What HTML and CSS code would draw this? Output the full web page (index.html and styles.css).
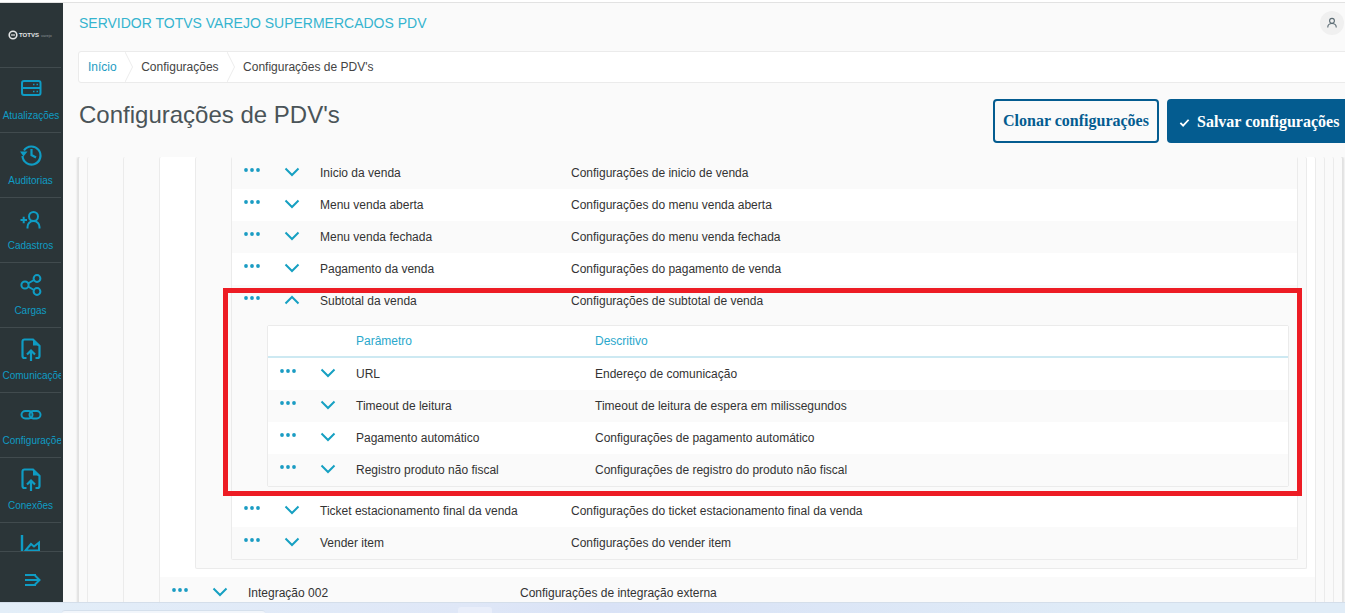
FILE: index.html
```html
<!DOCTYPE html>
<html lang="pt-BR">
<head>
<meta charset="utf-8">
<title>Configurações de PDV's</title>
<link rel="stylesheet" href="styles.css">
</head>
<body>
<svg class="sprites" width="0" height="0" aria-hidden="true">
  <symbol id="dots" viewBox="0 0 16 4"><circle cx="2" cy="2" r="1.9"/><circle cx="8" cy="2" r="1.9"/><circle cx="14" cy="2" r="1.9"/></symbol>
  <symbol id="down" viewBox="0 0 16 10"><path d="M1.5 1.5 8 8l6.500-6.500" fill="none" stroke="currentColor" stroke-width="2"/></symbol>
  <symbol id="up" viewBox="0 0 16 10"><path d="M1.500 8.500 8 2l6.500 6.500" fill="none" stroke="currentColor" stroke-width="2"/></symbol>
  <symbol id="upload" viewBox="0 0 24 24"><path d="M7.500 20H5.500a2 2 0 0 1-2-2V3.500a2 2 0 0 1 2-2H14l6.500 6.500V18a2 2 0 0 1-2 2h-2M12 23V13M8 16.500l4-4 4 4" fill="none" stroke="currentColor" stroke-width="2.200"/><path d="M14 2v5.500h6z" fill="currentColor"/></symbol>
</svg>

<div class="top-strip"></div>
<div class="app">
  <aside class="sidebar">
    <div class="logo">
      <svg class="logo-mark" viewBox="0 0 10 10"><circle cx="5" cy="5" r="3.800" fill="none" stroke="#e4e6e6" stroke-width="1.600"/><path d="M3 5h4" stroke="#e4e6e6" stroke-width="1.200"/></svg>
      <span class="logo-name">TOTVS</span>
      <span class="logo-sub">varejo</span>
    </div>
    <nav class="nav">
      <a class="nav-item">
        <svg class="nav-icon" viewBox="0 0 24 24"><rect x="3" y="3" width="18.500" height="14" rx="2" fill="none" stroke="currentColor" stroke-width="2"/><path d="M3 10h18.500" stroke="currentColor" stroke-width="2"/><path d="M14 6.500h1.500M17.500 6.500H19M14 13.500h1.500M17.500 13.500H19" stroke="currentColor" stroke-width="1.500"/></svg>
        <span class="nav-label">Atualizações</span>
      </a>
      <a class="nav-item">
        <svg class="nav-icon" viewBox="0 0 24 24"><path d="M5 7.500A9 9 0 1 1 3.500 13" fill="none" stroke="currentColor" stroke-width="2.200"/><path d="M1 8.500h7.500L4.500 13.500z" fill="currentColor"/><path d="M12.500 6v6l4.500 2.500" fill="none" stroke="currentColor" stroke-width="2.200"/></svg>
        <span class="nav-label">Auditorias</span>
      </a>
      <a class="nav-item">
        <svg class="nav-icon" viewBox="0 0 24 24"><path d="M1.500 12h6.500M4.700 8.700v6.500" stroke="currentColor" stroke-width="2"/><circle cx="14.500" cy="8.500" r="4.500" fill="none" stroke="currentColor" stroke-width="2"/><path d="M8.500 20.500v-1.500a6 6 0 0 1 12 0v1.500" fill="none" stroke="currentColor" stroke-width="2"/></svg>
        <span class="nav-label">Cadastros</span>
      </a>
      <a class="nav-item">
        <svg class="nav-icon" viewBox="0 0 24 24"><circle cx="6" cy="12" r="3.600" fill="none" stroke="currentColor" stroke-width="2"/><circle cx="18" cy="5.500" r="3.400" fill="none" stroke="currentColor" stroke-width="2"/><circle cx="18" cy="18.500" r="3.400" fill="none" stroke="currentColor" stroke-width="2"/><path d="M9 10.500l6-3.500M9 13.500l6 3.500" stroke="currentColor" stroke-width="2"/></svg>
        <span class="nav-label">Cargas</span>
      </a>
      <a class="nav-item">
        <svg class="nav-icon"><use href="#upload"/></svg>
        <span class="nav-label">Comunicações</span>
      </a>
      <a class="nav-item">
        <svg class="nav-icon" viewBox="0 0 24 24"><rect x="2.500" y="8" width="11" height="7.500" rx="3.750" fill="none" stroke="currentColor" stroke-width="2"/><rect x="10.500" y="8" width="11" height="7.500" rx="3.750" fill="none" stroke="currentColor" stroke-width="2"/></svg>
        <span class="nav-label">Configurações</span>
      </a>
      <a class="nav-item">
        <svg class="nav-icon"><use href="#upload"/></svg>
        <span class="nav-label">Conexões</span>
      </a>
      <a class="nav-item">
        <svg class="nav-icon" viewBox="0 0 24 24"><path d="M3 2v16" stroke="currentColor" stroke-width="2.400"/><path d="M6.500 17.500l5.500-6.500 3 2.500 5-4v8z" fill="none" stroke="currentColor" stroke-width="2"/></svg>
      </a>
    </nav>
    <div class="collapse">
      <svg class="collapse-icon" viewBox="0 0 18 14"><path d="M1 2h11M1 7h14M1 12h11M11 2.500 15.500 7 11 11.500" fill="none" stroke="currentColor" stroke-width="2"/></svg>
    </div>
  </aside>

  <main class="main">
    <header class="title-bar">
      <span class="app-title">SERVIDOR TOTVS VAREJO SUPERMERCADOS PDV</span>
      <span class="avatar"><svg viewBox="0 0 12 12"><circle cx="6" cy="3.800" r="2.400" fill="none" stroke="#5a6a72" stroke-width="1.100"/><path d="M1.800 10.500V10a4.200 3.500 0 0 1 8.400 0v.5" fill="none" stroke="#5a6a72" stroke-width="1.100"/></svg></span>
    </header>

    <nav class="crumbs">
      <a class="crumb crumb--link">Início</a>
      <svg class="crumb-sep" viewBox="0 0 8 30"><path d="M0 0l7.500 15L0 30" fill="none" stroke="#ececec"/></svg>
      <a class="crumb">Configurações</a>
      <svg class="crumb-sep" viewBox="0 0 8 30"><path d="M0 0l7.500 15L0 30" fill="none" stroke="#ececec"/></svg>
      <a class="crumb">Configurações de PDV's</a>
    </nav>

    <div class="page-head">
      <h1 class="page-title">Configurações de PDV's</h1>
      <div class="actions">
        <button class="btn btn--outline">Clonar configurações</button>
        <button class="btn btn--solid"><svg class="btn-check" viewBox="0 0 12 12"><path d="M1.500 6.500 4.500 9.500 10.500 3" fill="none" stroke="#fff" stroke-width="2"/></svg>Salvar configurações</button>
      </div>
    </div>

    <section class="scroller">
      <div class="tree tree--root">
        <div class="detail detail--first">
          <div class="tree tree--cut">
            <div class="detail detail--cut">
              <div class="tree tree--cut">
                <div class="detail detail--cut">
                  <div class="tree tree--cut tree--white tree--l3">
                    <div class="detail detail--cut">
                      <div class="tree tree--cut">
                        <div class="detail detail--cut">
                          <div class="tree tree--cut tree--l5">
                            <div class="row row--alt"><svg class="dots"><use href="#dots"/></svg><svg class="chev"><use href="#down"/></svg><span>Inicio da venda</span><span>Configurações de inicio de venda</span></div>
                            <div class="row"><svg class="dots"><use href="#dots"/></svg><svg class="chev"><use href="#down"/></svg><span>Menu venda aberta</span><span>Configurações do menu venda aberta</span></div>
                            <div class="row row--alt"><svg class="dots"><use href="#dots"/></svg><svg class="chev"><use href="#down"/></svg><span>Menu venda fechada</span><span>Configurações do menu venda fechada</span></div>
                            <div class="row"><svg class="dots"><use href="#dots"/></svg><svg class="chev"><use href="#down"/></svg><span>Pagamento da venda</span><span>Configurações do pagamento de venda</span></div>
                            <div class="row row--alt"><svg class="dots"><use href="#dots"/></svg><svg class="chev"><use href="#up"/></svg><span>Subtotal da venda</span><span>Configurações de subtotal de venda</span></div>
                            <div class="detail">
                              <div class="tree tree--l6">
                                <div class="row row--head"><span></span><span></span><span>Parâmetro</span><span>Descritivo</span></div>
                                <div class="row"><svg class="dots"><use href="#dots"/></svg><svg class="chev"><use href="#down"/></svg><span>URL</span><span>Endereço de comunicação</span></div>
                                <div class="row row--alt"><svg class="dots"><use href="#dots"/></svg><svg class="chev"><use href="#down"/></svg><span>Timeout de leitura</span><span>Timeout de leitura de espera em milissegundos</span></div>
                                <div class="row"><svg class="dots"><use href="#dots"/></svg><svg class="chev"><use href="#down"/></svg><span>Pagamento automático</span><span>Configurações de pagamento automático</span></div>
                                <div class="row row--alt"><svg class="dots"><use href="#dots"/></svg><svg class="chev"><use href="#down"/></svg><span>Registro produto não fiscal</span><span>Configurações de registro do produto não fiscal</span></div>
                              </div>
                            </div>
                            <div class="row"><svg class="dots"><use href="#dots"/></svg><svg class="chev"><use href="#down"/></svg><span>Ticket estacionamento final da venda</span><span>Configurações do ticket estacionamento final da venda</span></div>
                            <div class="row row--alt"><svg class="dots"><use href="#dots"/></svg><svg class="chev"><use href="#down"/></svg><span>Vender item</span><span>Configurações do vender item</span></div>
                          </div>
                        </div>
                      </div>
                    </div>
                    <div class="row row--alt"><svg class="dots"><use href="#dots"/></svg><svg class="chev"><use href="#down"/></svg><span>Integração 002</span><span>Configurações de integração externa</span></div>
                  </div>
                </div>
              </div>
            </div>
          </div>
        </div>
      </div>
    </section>
  </main>
</div>
<footer class="taskbar">
  <span class="task-search"></span>
  <span class="task-button"></span>
</footer>
<div class="highlight"></div>
</body>
</html>
```

FILE: styles.css
```css
* { box-sizing: border-box; }

html, body {
  height: 100%;
  margin: 0;
}

body {
  display: flex;
  flex-direction: column;
  overflow: hidden;
  background: #fafafa;
  color: #333;
  font-family: "Liberation Sans", Arial, sans-serif;
  font-size: 12px;
}

.sprites { position: absolute; }

.top-strip {
  flex: 0 0 3px;
  background: #fff;
  border-bottom: 1px solid #e2e2e2;
}

.app {
  flex: 0 0 599px;
  display: flex;
  min-height: 0;
}

/* Sidebar */
.sidebar {
  flex: 0 0 63px;
  display: flex;
  flex-direction: column;
  background: #2b3538;
  color: #0f9cc4;
  overflow: hidden;
}

.logo {
  flex: 0 0 65px;
  width: 61px;
  display: flex;
  align-items: center;
  padding-left: 8px;
  border-bottom: 1px solid #414b4e;
}

.logo-mark { width: 10px; height: 10px; margin-right: 1px; }

.logo-name {
  font-size: 6px;
  font-weight: 700;
  color: #e4e6e6;
}

.logo-sub {
  font-size: 4px;
  color: #8b9396;
  margin-left: 2px;
}

.nav {
  flex: 0 0 483px;
  overflow: hidden;
}

.nav-item {
  display: flex;
  flex-direction: column;
  align-items: center;
  width: 61px;
  height: 65px;
  padding-top: 10px;
  border-bottom: 1px solid #414b4e;
}

.nav-icon {
  display: block;
  flex: none;
  width: 24px;
  height: 24px;
}

.nav-label {
  display: block;
  width: 60px;
  margin-top: 7px;
  overflow: hidden;
  font-size: 10px;
  line-height: 14px;
  text-align: center;
  white-space: nowrap;
}

.nav-item:first-child .nav-label { padding-left: 1px; }

.nav-item:nth-child(5) .nav-label,
.nav-item:nth-child(6) .nav-label { text-align: left; padding-left: 2px; }

.collapse {
  flex: 1;
  display: flex;
  align-items: center;
  justify-content: center;
  padding-top: 6px;
  border-top: 1px solid #414b4e;
}

.collapse-icon { width: 18px; height: 14px; margin-left: 2px; }

/* Main */
.main {
  flex: 1;
  min-width: 0;
  display: flex;
  flex-direction: column;
  overflow: hidden;
}

.title-bar {
  flex: 0 0 48px;
  display: flex;
  align-items: flex-start;
  justify-content: space-between;
  padding: 12px 1px 0 16px;
}

.app-title {
  font-size: 14px;
  line-height: 17px;
  color: #35b4cf;
}

.avatar {
  display: flex;
  align-items: center;
  justify-content: center;
  width: 24px;
  height: 24px;
  margin-top: -4px;
  border-radius: 50%;
  background: #f0f0f0;
}

.avatar svg { width: 12px; height: 12px; }

.crumbs {
  flex: 0 0 32px;
  display: flex;
  align-items: center;
  margin-left: 15px;
  margin-right: -4px;
  padding-left: 9px;
  background: #fff;
  border: 1px solid #ebebeb;
  border-radius: 3px;
  color: #444;
}

.crumb--link { color: #1d9cc3; }

.crumb-sep {
  flex: none;
  width: 8px;
  height: 30px;
  margin: 0 8.25px;
}

.page-head {
  flex: 0 0 74px;
  display: flex;
  align-items: flex-start;
  justify-content: space-between;
  margin-left: 16px;
  margin-right: -6px;
  padding-top: 16px;
}

.page-title {
  margin: 0;
  font-size: 24px;
  font-weight: 400;
  line-height: 32px;
  color: #4a5458;
}

.actions {
  display: flex;
  gap: 8px;
}

.btn {
  height: 44px;
  border-radius: 4px;
  font-family: "Liberation Serif", "Times New Roman", serif;
  font-size: 16px;
  font-weight: 700;
  white-space: nowrap;
}

.btn--outline {
  width: 166px;
  padding: 0;
  background: #fafafa;
  border: 2px solid #045c90;
  color: #045c90;
}

.btn--solid {
  display: flex;
  align-items: center;
  width: 184px;
  padding: 2px 0 0 12px;
  background: #045c90;
  border: 0;
  color: #fff;
}

.btn-check { width: 11px; height: 11px; margin-right: 7px; }

/* Nested tree of tables */
.scroller {
  flex: 1;
  min-height: 0;
  overflow: hidden;
  padding-left: 15px;
  background: #fafafa;
}

.tree {
  border: 1px solid #ebebeb;
  border-radius: 2px;
  background: #fafafa;
}

.tree--root {
  width: 1265px;
  box-shadow: -1px 0 2px #ddd, 1px 0 2px #ddd;
  border-top: 0;
  border-left-color: #e2e2e2;
  border-right-color: #e2e2e2;
  min-height: 500px;
}

.tree--cut { border-top: 0; }
.tree--white { background: #fff; }

.detail {
  padding: 8px 8px 8px 35px;
}

.detail--cut { padding-top: 0; }
.detail--first { padding: 0 8px; }

.row {
  display: grid;
  grid-template-columns: 41px 35px var(--name, 251px) 1fr;
  align-items: center;
  height: 32px;
  padding-left: 12px;
  background: #fff;
  color: #333;
  white-space: nowrap;
}

.row--alt { background: #fafafa; }

.tree--l3 > .row { --name: 272px; }
.tree--l5 { --name: 251px; }
.tree--l6 { --name: 239px; }

.row--head {
  background: #fff;
  border-bottom: 2px solid #cde9f2;
  color: #2aa8cc;
}

.dots {
  display: block;
  width: 16px;
  height: 4px;
  margin-top: -7px;
  fill: #1a9cc3;
}

.chev {
  display: block;
  width: 16px;
  height: 10px;
  margin-left: -1px;
  margin-top: -3px;
  color: #16a0c2;
}

/* Taskbar of the captured desktop */
.taskbar {
  flex: 1;
  display: flex;
  align-items: flex-end;
  padding-left: 62px;
  background: linear-gradient(90deg, #e3eef8 0%, #dfe7f7 35%, #d9e2f6 45%, #e0ecf7 85%);
  border-top: 1px solid #d4deea;
}

.task-search {
  width: 203px;
  height: 3px;
  background: #f2f6fb;
  border-radius: 6px 6px 0 0;
  border-top: 1px solid #d5e0ec;
}

.task-button {
  width: 34px;
  height: 6px;
  margin-left: 193px;
  background: #e9eefa;
  border-radius: 3px 3px 0 0;
}

/* Annotation drawn over the capture */
.highlight {
  position: absolute;
  left: 223px;
  top: 288px;
  width: 1079px;
  height: 208px;
  border: 5px solid #ed1c24;
  pointer-events: none;
}
```
